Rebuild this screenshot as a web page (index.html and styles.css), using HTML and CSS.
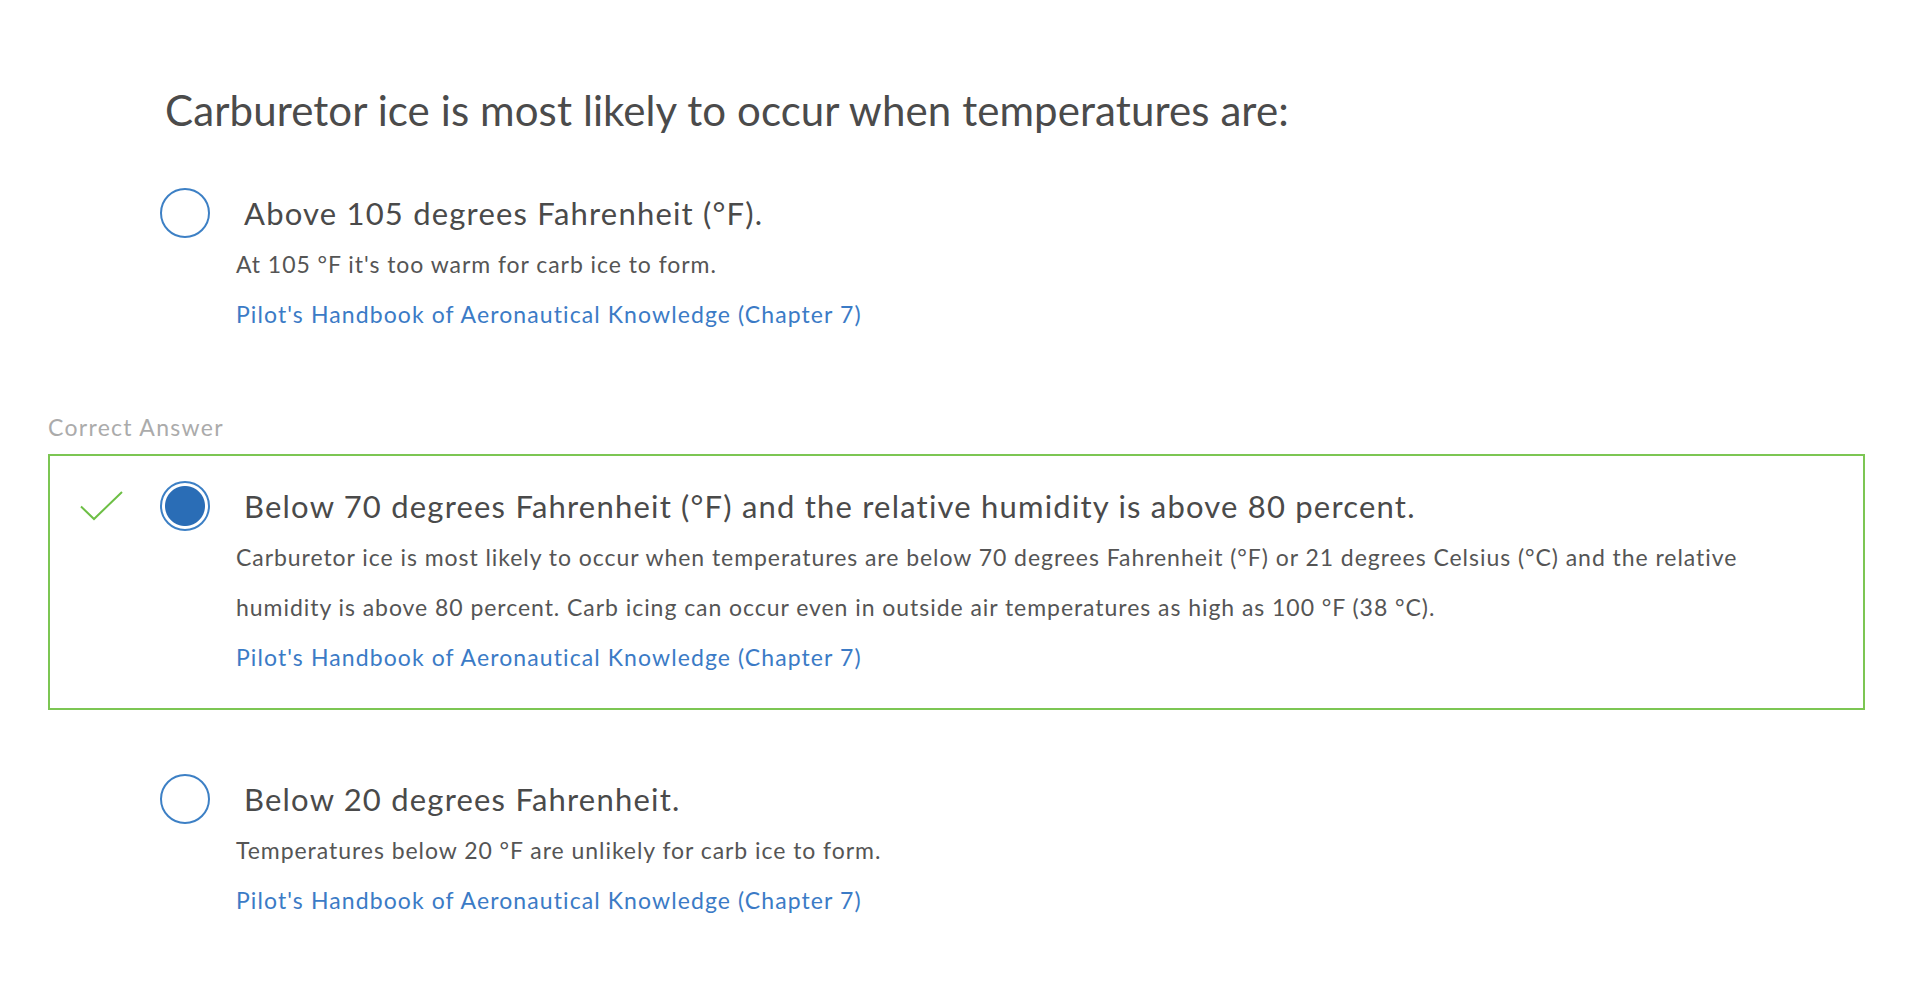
FILE: index.html
```html
<!DOCTYPE html>
<html lang="en">
<head>
<meta charset="utf-8">
<title>Quiz review</title>
<link rel="stylesheet" href="styles.css">
</head>
<body>
<main class="page">
  <h1 class="question">Carburetor ice is most likely to occur when temperatures are:</h1>

  <div class="option">
    <div class="gutter"></div>
    <div class="body">
      <div class="row"><span class="radio"></span><span class="label">Above 105 degrees Fahrenheit (°F).</span></div>
      <div class="detail">
        <p class="explain">At 105 °F it's too warm for carb ice to form.</p>
        <a class="ref" href="#">Pilot's Handbook of Aeronautical Knowledge (Chapter 7)</a>
      </div>
    </div>
  </div>

  <div class="tag">Correct Answer</div>
  <div class="option correct">
    <div class="gutter">
      <svg class="check" width="44" height="30" viewBox="0 0 44 30"><polyline points="1,15.5 14,28 42,1" fill="none" stroke="#6dbf45" stroke-width="2"/></svg>
    </div>
    <div class="body">
      <div class="row"><span class="radio checked"></span><span class="label">Below 70 degrees Fahrenheit (°F) and the relative humidity is above 80 percent.</span></div>
      <div class="detail">
        <p class="explain">Carburetor ice is most likely to occur when temperatures are below 70 degrees Fahrenheit (°F) or 21 degrees Celsius (°C) and the relative humidity is above 80 percent. Carb icing can occur even in outside air temperatures as high as 100 °F (38 °C).</p>
        <a class="ref" href="#">Pilot's Handbook of Aeronautical Knowledge (Chapter 7)</a>
      </div>
    </div>
  </div>

  <div class="option last">
    <div class="gutter"></div>
    <div class="body">
      <div class="row"><span class="radio"></span><span class="label">Below 20 degrees Fahrenheit.</span></div>
      <div class="detail">
        <p class="explain">Temperatures below 20 °F are unlikely for carb ice to form.</p>
        <a class="ref" href="#">Pilot's Handbook of Aeronautical Knowledge (Chapter 7)</a>
      </div>
    </div>
  </div>
</main>
</body>
</html>
```

FILE: styles.css
```css
html, body {
  margin: 0;
  padding: 0;
  background: #ffffff;
}

body {
  font-family: Lato, "Open Sans", sans-serif;
  color: #4a4a4a;
}

.page {
  padding: 85px 55px 0 48px;
}

.question {
  margin: 0 0 26px 0;
  padding-left: 117px;
  font-size: 42px;
  font-weight: 400;
  line-height: 50px;
  letter-spacing: 0.1px;
  color: #4b4b4b;
}

.option {
  display: flex;
  border: 2px solid transparent;
  padding: 25px 0;
}

.option.correct {
  border-color: #7cc653;
}

.option.last {
  margin-top: 37px;
}

.gutter {
  width: 110px;
  height: 50px;
  flex: none;
  display: flex;
  align-items: center;
}

.check {
  margin-left: 30px;
}

.body {
  flex: 1;
  min-width: 0;
}

.row {
  display: flex;
  align-items: center;
  height: 50px;
}

.radio {
  width: 50px;
  height: 50px;
  box-sizing: border-box;
  border: 2px solid #3d80c5;
  border-radius: 50%;
  flex: none;
  background: #fff;
}

.radio.checked {
  background: radial-gradient(circle, #2a6db6 0 19.5px, #ffffff 20.5px 100%);
}

.label {
  margin-left: 34px;
  font-size: 31px;
  letter-spacing: 1.2px;
  color: #4a4a4a;
}

.detail {
  margin-left: 76px;
  padding: 1px 80px 1px 0;
  font-size: 23px;
  line-height: 50px;
}

.explain {
  margin: 0;
  letter-spacing: 0.95px;
  color: #555555;
}

.ref {
  display: block;
  letter-spacing: 1.1px;
  color: #3b7bc6;
  text-decoration: none;
}

.tag {
  margin: 46px 0 13px 0;
  font-size: 23px;
  line-height: 28px;
  letter-spacing: 1.3px;
  color: #ababab;
}
```
